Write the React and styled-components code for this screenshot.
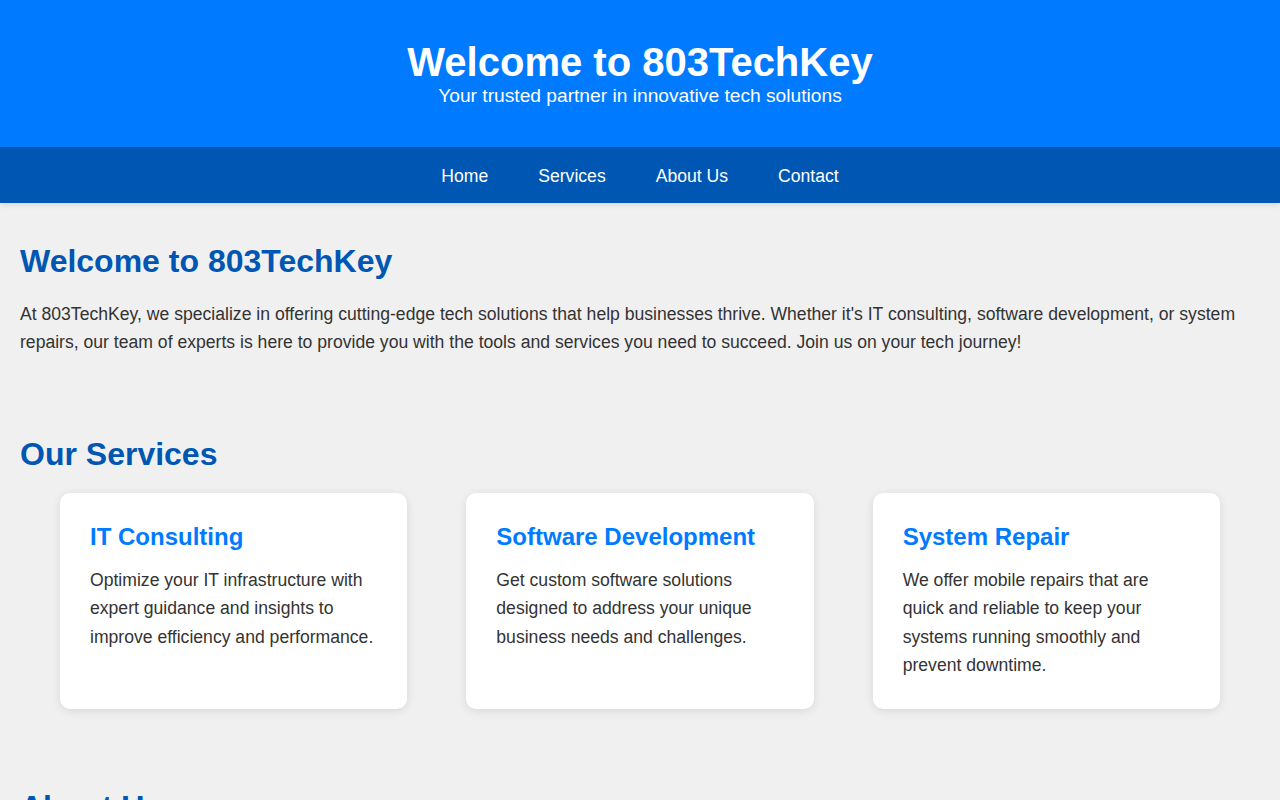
import React from "react";
import styled, { createGlobalStyle } from "styled-components";

const GlobalStyle = createGlobalStyle`
  body {
    margin: 0;
    background: #f0f0f0;
    color: #333;
    font-family: "Liberation Sans", Arial, sans-serif;
    font-size: 16px;
  }
`;

const Header = styled.header`
  background: #007bff;
  color: #fff;
  text-align: center;
  padding: 39px 20px 40px;
`;

const HeaderTitle = styled.h1`
  margin: 0;
  font-size: 40px;
  font-weight: 700;
  line-height: 46px;
`;

const Tagline = styled.p`
  margin: 0;
  font-size: 19.2px;
  line-height: 22px;
`;

const Nav = styled.nav`
  background: #0056b3;
  display: flex;
  justify-content: center;
  gap: 10px;
  padding: 19px 0 17px;
  box-shadow: 0 2px 5px rgba(0, 0, 0, 0.1);
  position: relative;
`;

const NavLink = styled.a`
  color: #fff;
  text-decoration: none;
  font-size: 17.6px;
  line-height: 20px;
  padding: 0 20px;
`;

const Main = styled.main`
  padding: 40px 20px;
  display: flex;
  flex-direction: column;
  gap: 80px;
`;

const Section = styled.section``;

const SectionTitle = styled.h2`
  margin: 0 0 20px;
  font-size: 32px;
  line-height: 37px;
  color: #0056b3;
`;

const Text = styled.p`
  margin: 0;
  font-size: 17.6px;
  line-height: 1.6;
`;

const CardRow = styled.div`
  display: flex;
  gap: 59px;
  padding: 0 40px;
`;

const Card = styled.div`
  flex: 1;
  background: #fff;
  border-radius: 10px;
  padding: 30px;
  box-shadow: 0 2px 10px rgba(0, 0, 0, 0.1);
`;

const CardTitle = styled.h3`
  margin: 0 0 15px;
  font-size: 24px;
  line-height: 28px;
  color: #007bff;
`;

const Footer = styled.footer`
  background: #0056b3;
  color: #fff;
  text-align: center;
  padding: 20px;
  font-size: 14px;
`;

const services = [
  {
    title: "IT Consulting",
    text: "Optimize your IT infrastructure with expert guidance and insights to improve efficiency and performance.",
  },
  {
    title: "Software Development",
    text: "Get custom software solutions designed to address your unique business needs and challenges.",
  },
  {
    title: "System Repair",
    text: "We offer mobile repairs that are quick and reliable to keep your systems running smoothly and prevent downtime.",
  },
];

export default function App() {
  return (
    <>
      <GlobalStyle />
      <Header>
        <HeaderTitle>Welcome to 803TechKey</HeaderTitle>
        <Tagline>Your trusted partner in innovative tech solutions</Tagline>
      </Header>
      <Nav>
        <NavLink href="#home">Home</NavLink>
        <NavLink href="#services">Services</NavLink>
        <NavLink href="#about">About Us</NavLink>
        <NavLink href="#contact">Contact</NavLink>
      </Nav>
      <Main>
        <Section id="home">
          <SectionTitle>Welcome to 803TechKey</SectionTitle>
          <Text>
            At 803TechKey, we specialize in offering cutting-edge tech solutions that help businesses thrive.
            Whether it's IT consulting, software development, or system repairs, our team of experts is here to
            provide you with the tools and services you need to succeed. Join us on your tech journey!
          </Text>
        </Section>
        <Section id="services">
          <SectionTitle>Our Services</SectionTitle>
          <CardRow>
            {services.map((s) => (
              <Card key={s.title}>
                <CardTitle>{s.title}</CardTitle>
                <Text>{s.text}</Text>
              </Card>
            ))}
          </CardRow>
        </Section>
        <Section id="about">
          <SectionTitle>About Us</SectionTitle>
          <Text>
            803TechKey is a team of passionate technology professionals dedicated to delivering reliable,
            innovative solutions for businesses of every size.
          </Text>
        </Section>
        <Section id="contact">
          <SectionTitle>Contact</SectionTitle>
          <Text>Have a question or a project in mind? Get in touch with us today.</Text>
        </Section>
      </Main>
      <Footer>&copy; 2024 803TechKey. All rights reserved.</Footer>
    </>
  );
}
